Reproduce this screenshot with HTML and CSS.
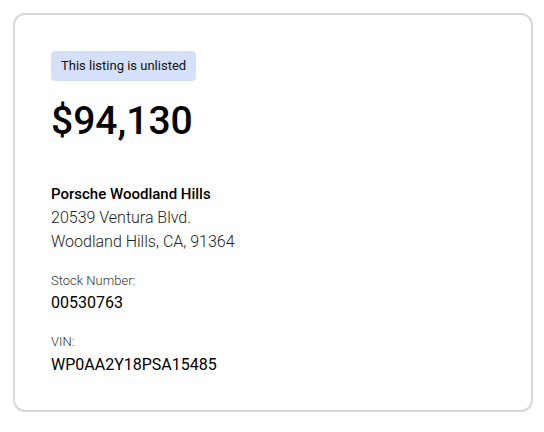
FILE: index.html
```html
<!DOCTYPE html>
<html>
<head>
<meta charset="utf-8">
<link rel="stylesheet" href="styles.css">
</head>
<body>
<div class="card">
  <div class="badge">This listing is unlisted</div>
  <div class="price">$94,130</div>
  <div class="dealer">
    <div class="dealer-name">Porsche Woodland Hills</div>
    <div class="addr">20539 Ventura Blvd.</div>
    <div class="addr">Woodland Hills, CA, 91364</div>
  </div>
  <div class="field">
    <div class="label">Stock Number:</div>
    <div class="value">00530763</div>
  </div>
  <div class="field">
    <div class="label">VIN:</div>
    <div class="value">WP0AA2Y18PSA15485</div>
  </div>
</div>
</body>
</html>
```
FILE: styles.css
```css
html, body {
  margin: 0;
  padding: 0;
  background: #fff;
}
body {
  padding: 13px;
  font-family: Roboto, "Liberation Sans", sans-serif;
  color: #000;
}
.card {
  box-sizing: border-box;
  width: 520px;
  height: 399px;
  border: 2px solid #d8d8d8;
  border-radius: 12px;
  padding: 36px 36px;
  display: flex;
  flex-direction: column;
  align-items: flex-start;
}
.badge {
  height: 30px;
  line-height: 30px;
  padding: 0 10px;
  background: #d5e1fb;
  border-radius: 4px;
  font-size: 13px;
  color: #111;
}
.price {
  margin-top: 16px;
  font-size: 39px;
  line-height: 48px;
  font-weight: 500;
}
.dealer {
  margin-top: 37px;
  font-size: 15px;
  line-height: 24px;
}
.dealer-name {
  font-weight: 500;
}
.addr {
  color: #222;
  font-weight: 300;
  font-size: 16px;
}
.field {
  margin-top: 16px;
}
.field + .field {
  margin-top: 16px;
}
.label {
  font-size: 13px;
  line-height: 21px;
  color: #333;
  font-weight: 300;
}
.field + .field .label {
  line-height: 22px;
}
.value {
  font-size: 16px;
  line-height: 24px;
}
```
